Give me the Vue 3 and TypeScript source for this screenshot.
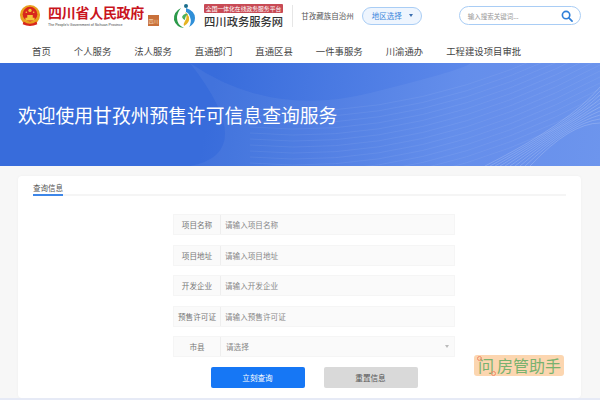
<template>
    <div class="page">
        <header class="top">
            <div class="brand">
                <!-- emblem -->
                <svg class="emblem" width="22" height="23" viewBox="0 0 24 25">
                    <circle cx="12" cy="12" r="11" fill="#e8a01e" />
                    <circle cx="12" cy="11" r="8" fill="#d8261c" />
                    <path d="M5 19q7 5 14 0l1 3q-8 4-16 0z" fill="#d8261c" />
                    <path d="M7 15h10v3H7zM9 12h6v3H9z" fill="#f4c53a" />
                    <circle cx="12" cy="7" r="1.8" fill="#f4c53a" />
                    <circle cx="8" cy="9" r=".9" fill="#f4c53a" />
                    <circle cx="16" cy="9" r=".9" fill="#f4c53a" />
                </svg>
                <div class="gov">
                    <div class="gov-name">四川省人民政府</div>
                    <div class="gov-en">The People's Government of Sichuan Province</div>
                </div>
                <div class="seal">四川</div>
            </div>
            <div class="brand second">
                <!-- swirl logo -->
                <svg class="swirl" width="24" height="26" viewBox="0 0 24 26">
                    <path d="M8 5Q0 9 1 17q2 7 10 8-7-3-7-10 0-5 4-10z" fill="#2b9a4a" />
                    <path d="M13 5q9 3 9 10 0 6-6 9 3-5 1-10-1-4-4-5z" fill="#2f8fd8" />
                    <path d="M11 23q6-3 5-9-1-3-4-5 3 6 0 9-2 3-1 5z" fill="#e6b422" />
                    <path d="M9 14q2-4 6-3-3 2-3 6-2 0-3-3z" fill="#4fb05c" />
                    <circle cx="13" cy="3" r="2" fill="#1c6e8c" />
                </svg>
                <div class="net">
                    <div class="net-tag">全国一体化在线政务服务平台</div>
                    <div class="net-name">四川政务服务网</div>
                </div>
            </div>
            <div class="divider"></div>
            <div class="region">甘孜藏族自治州</div>
            <div class="region-pill">地区选择<span class="caret"></span></div>
            <div class="search">
                <span>输入搜索关键词...</span>
                <svg width="12" height="12" viewBox="0 0 13 13" fill="none" stroke="#2f7fd8" stroke-width="1.8">
                    <circle cx="5.5" cy="5.5" r="4" />
                    <path d="M8.5 8.5L12 12" stroke-linecap="round" />
                </svg>
            </div>
        </header>
        <nav class="nav">
            <a v-for="item in navItems" :key="item">{{ item }}</a>
        </nav>
        <section class="banner">
            <svg class="waves" width="600" height="103" viewBox="0 0 600 103" fill="none">
                <path d="M190 0Q270 55 370 30T470 0H600V103H190Q260 90 190 0z" fill="#fff" opacity=".05" />
                <path v-for="n in 14" :key="n" :d="wavePath(n)" stroke="#fff" stroke-width=".5" opacity=".13" />
                <path v-for="n in 10" :key="'c' + n" :d="cornerPath(n)" stroke="#fff" stroke-width=".6" opacity=".3" />
            </svg>
            <h1>欢迎使用甘孜州预售许可信息查询服务</h1>
        </section>
        <main class="content">
            <div class="card">
                <div class="tabs"><span class="tab">查询信息</span></div>
                <form class="form" @submit.prevent>
                    <div v-for="field in fields" :key="field" class="row">
                        <div class="label">{{ field }}</div>
                        <div class="value">请输入{{ field }}</div>
                    </div>
                    <div class="row">
                        <div class="label">市县</div>
                        <div class="value select">请选择<span class="arrow"></span></div>
                    </div>
                    <div class="actions">
                        <button class="btn primary" type="button">立刻查询</button>
                        <button class="btn" type="button">重置信息</button>
                    </div>
                </form>
            </div>
        </main>
        <div class="strip"></div>
        <div class="stamp">
            <span class="stamp-mark">问</span>房管助手
        </div>
    </div>
</template>

<script setup lang="ts">
const navItems: string[] = ['首页', '个人服务', '法人服务', '直通部门', '直通区县', '一件事服务', '川渝通办', '工程建设项目审批']
const fields: string[] = ['项目名称', '项目地址', '开发企业', '预售许可证']

function wavePath(n: number): string {
    const y = n * 6
    return `M250 ${y + 40}Q420 ${y + 55} 600 ${y - 40}`
}

function cornerPath(n: number): string {
    const x = 480 + n * 5
    return `M${x} 103Q570 60 600 ${n * 4 + 20}`
}
</script>

<style scoped>
.page {
    position: relative;
    width: 600px;
    height: 400px;
    overflow: hidden;
    background: #f7f7f7;
    font-family: "Noto Sans CJK SC", "Liberation Sans", sans-serif;
    color: #555;
}

.top {
    height: 31px;
    background: #fff;
    display: flex;
    align-items: center;
    padding-left: 19px;
    box-sizing: border-box;
}

.brand {
    display: flex;
    align-items: center;
}

.emblem {
    margin-right: 7px;
}

.gov {
    margin-top: 1px;
}

.gov-name {
    color: #c9151e;
    font-size: 14px;
    font-weight: 700;
    line-height: 14px;
    letter-spacing: -.02em;
}

.gov-en {
    margin-top: 3.5px;
    font-size: 3.6px;
    line-height: 4px;
    color: #444;
    font-family: "Liberation Sans", sans-serif;
}

.seal {
    width: 11px;
    height: 11px;
    margin: 9px 0 0 4px;
    background: #c8703a;
    color: #f6d9b8;
    font-size: 5px;
    line-height: 11px;
    text-align: center;
}

.second {
    margin-left: 14px;
}

.swirl {
    margin-right: 7px;
}

.net-tag {
    width: 79px;
    height: 9px;
    background: #c84a55;
    color: #fff;
    font-size: 5.8px;
    line-height: 9px;
    text-align: center;
    border-radius: 1px;
    white-space: nowrap;
}

.net-name {
    margin-top: 2px;
    font-size: 11.3px;
    font-weight: 500;
    line-height: 12px;
    color: #333;
    white-space: nowrap;
}

.divider {
    width: 1px;
    height: 22px;
    margin-left: 9px;
    background: #e6e6e6;
}

.region {
    margin-left: 8px;
    font-size: 7.5px;
    color: #555;
    white-space: nowrap;
}

.region-pill {
    margin-left: 8px;
    width: 60px;
    height: 18px;
    box-sizing: border-box;
    border: 1px solid #a9cdf5;
    border-radius: 9px;
    background: #eef5fe;
    color: #3c86dc;
    font-size: 7.5px;
    display: flex;
    align-items: center;
    padding-left: 9px;
    white-space: nowrap;
}

.caret {
    margin-left: 7px;
    border: 2px solid transparent;
    border-top: 3px solid #3c6fb0;
    border-bottom: 0;
}

.search {
    margin-left: 37px;
    width: 122px;
    height: 19px;
    box-sizing: border-box;
    border: 1px solid #a9cdf5;
    border-radius: 10px;
    display: flex;
    align-items: center;
    justify-content: space-between;
    padding: 0 7px 0 8px;
    font-size: 6.5px;
    color: #999;
    white-space: nowrap;
}

.nav {
    height: 32px;
    background: #fff;
    display: flex;
    align-items: center;
    gap: 23px;
    padding-left: 32px;
    padding-top: 8px;
    box-sizing: border-box;
    font-size: 9.4px;
    color: #444;
    white-space: nowrap;
}

.banner {
    position: relative;
    height: 103px;
    background: linear-gradient(100deg, #386cdb 0%, #386cdb 35%, #5c88ea 75%, #6690ec 100%);
    display: flex;
    align-items: center;
    padding-left: 18px;
    overflow: hidden;
}

.waves {
    position: absolute;
    left: 0;
    top: 0;
}

.banner h1 {
    position: relative;
    margin: 0;
    font-size: 18.8px;
    font-weight: 400;
    color: #fff;
    white-space: nowrap;
}

.content {
    padding: 10px 19px 0 18px;
}

.card {
    height: 222px;
    background: #fff;
    border-radius: 4px;
    padding: 0 15px;
    box-shadow: 0 0 3px rgba(0, 0, 0, .04);
}

.tabs {
    height: 20px;
    border-bottom: 2px solid #f5f5f5;
    display: flex;
    align-items: flex-end;
    box-sizing: border-box;
}

.tab {
    font-size: 7.5px;
    line-height: 16px;
    color: #555;
    height: 14px;
    border-bottom: 2px solid #3d86e8;
    margin-bottom: -2px;
}

.form {
    width: 282px;
    margin: 18px 0 0 140px;
    display: flex;
    flex-direction: column;
    gap: 9.5px;
}

.row {
    height: 21px;
    display: flex;
    background: #fafafa;
    border: 1px solid #f5f5f5;
    box-sizing: border-box;
    font-size: 7.6px;
    line-height: 19px;
}

.label {
    width: 47px;
    flex: none;
    box-sizing: border-box;
    border-right: 1px solid #eee;
    text-align: center;
    color: #777;
    white-space: nowrap;
}

.value {
    flex: 1;
    padding-left: 4px;
    color: #888;
    white-space: nowrap;
}

.select {
    position: relative;
    padding-left: 5px;
}

.arrow {
    position: absolute;
    right: 5px;
    top: 8px;
    border: 2px solid transparent;
    border-top: 3px solid #bbb;
    border-bottom: 0;
}

.actions {
    display: flex;
    justify-content: center;
    gap: 19px;
}

.btn {
    width: 94px;
    height: 21px;
    border: 0;
    border-radius: 2px;
    background: #d9d9d9;
    color: #555;
    font-family: inherit;
    font-size: 7.6px;
    padding: 0;
}

.primary {
    background: #1677f5;
    color: #fff;
}

.strip {
    height: 2px;
    background: #e6eaf6;
}

.stamp {
    position: absolute;
    left: 474px;
    top: 355px;
    width: 90px;
    height: 21px;
    box-sizing: border-box;
    padding-left: 4px;
    border-radius: 3px;
    background: #fcd6b0;
    color: #79b26f;
    font-size: 16px;
    line-height: 21px;
    white-space: nowrap;
}

.stamp-mark {
    position: relative;
    display: inline-block;
    margin-right: 3px;
}

.stamp-mark::before,
.stamp-mark::after {
    content: "";
    position: absolute;
    width: 3px;
    height: 3px;
    border: 1px solid #f28a6a;
    border-radius: 50%;
}

.stamp-mark::before {
    left: -1px;
    top: 1px;
}

.stamp-mark::after {
    right: -2px;
    bottom: 0;
}
</style>

<style>
html,
body {
    margin: 0;
    background: #f7f7f7;
}
</style>
